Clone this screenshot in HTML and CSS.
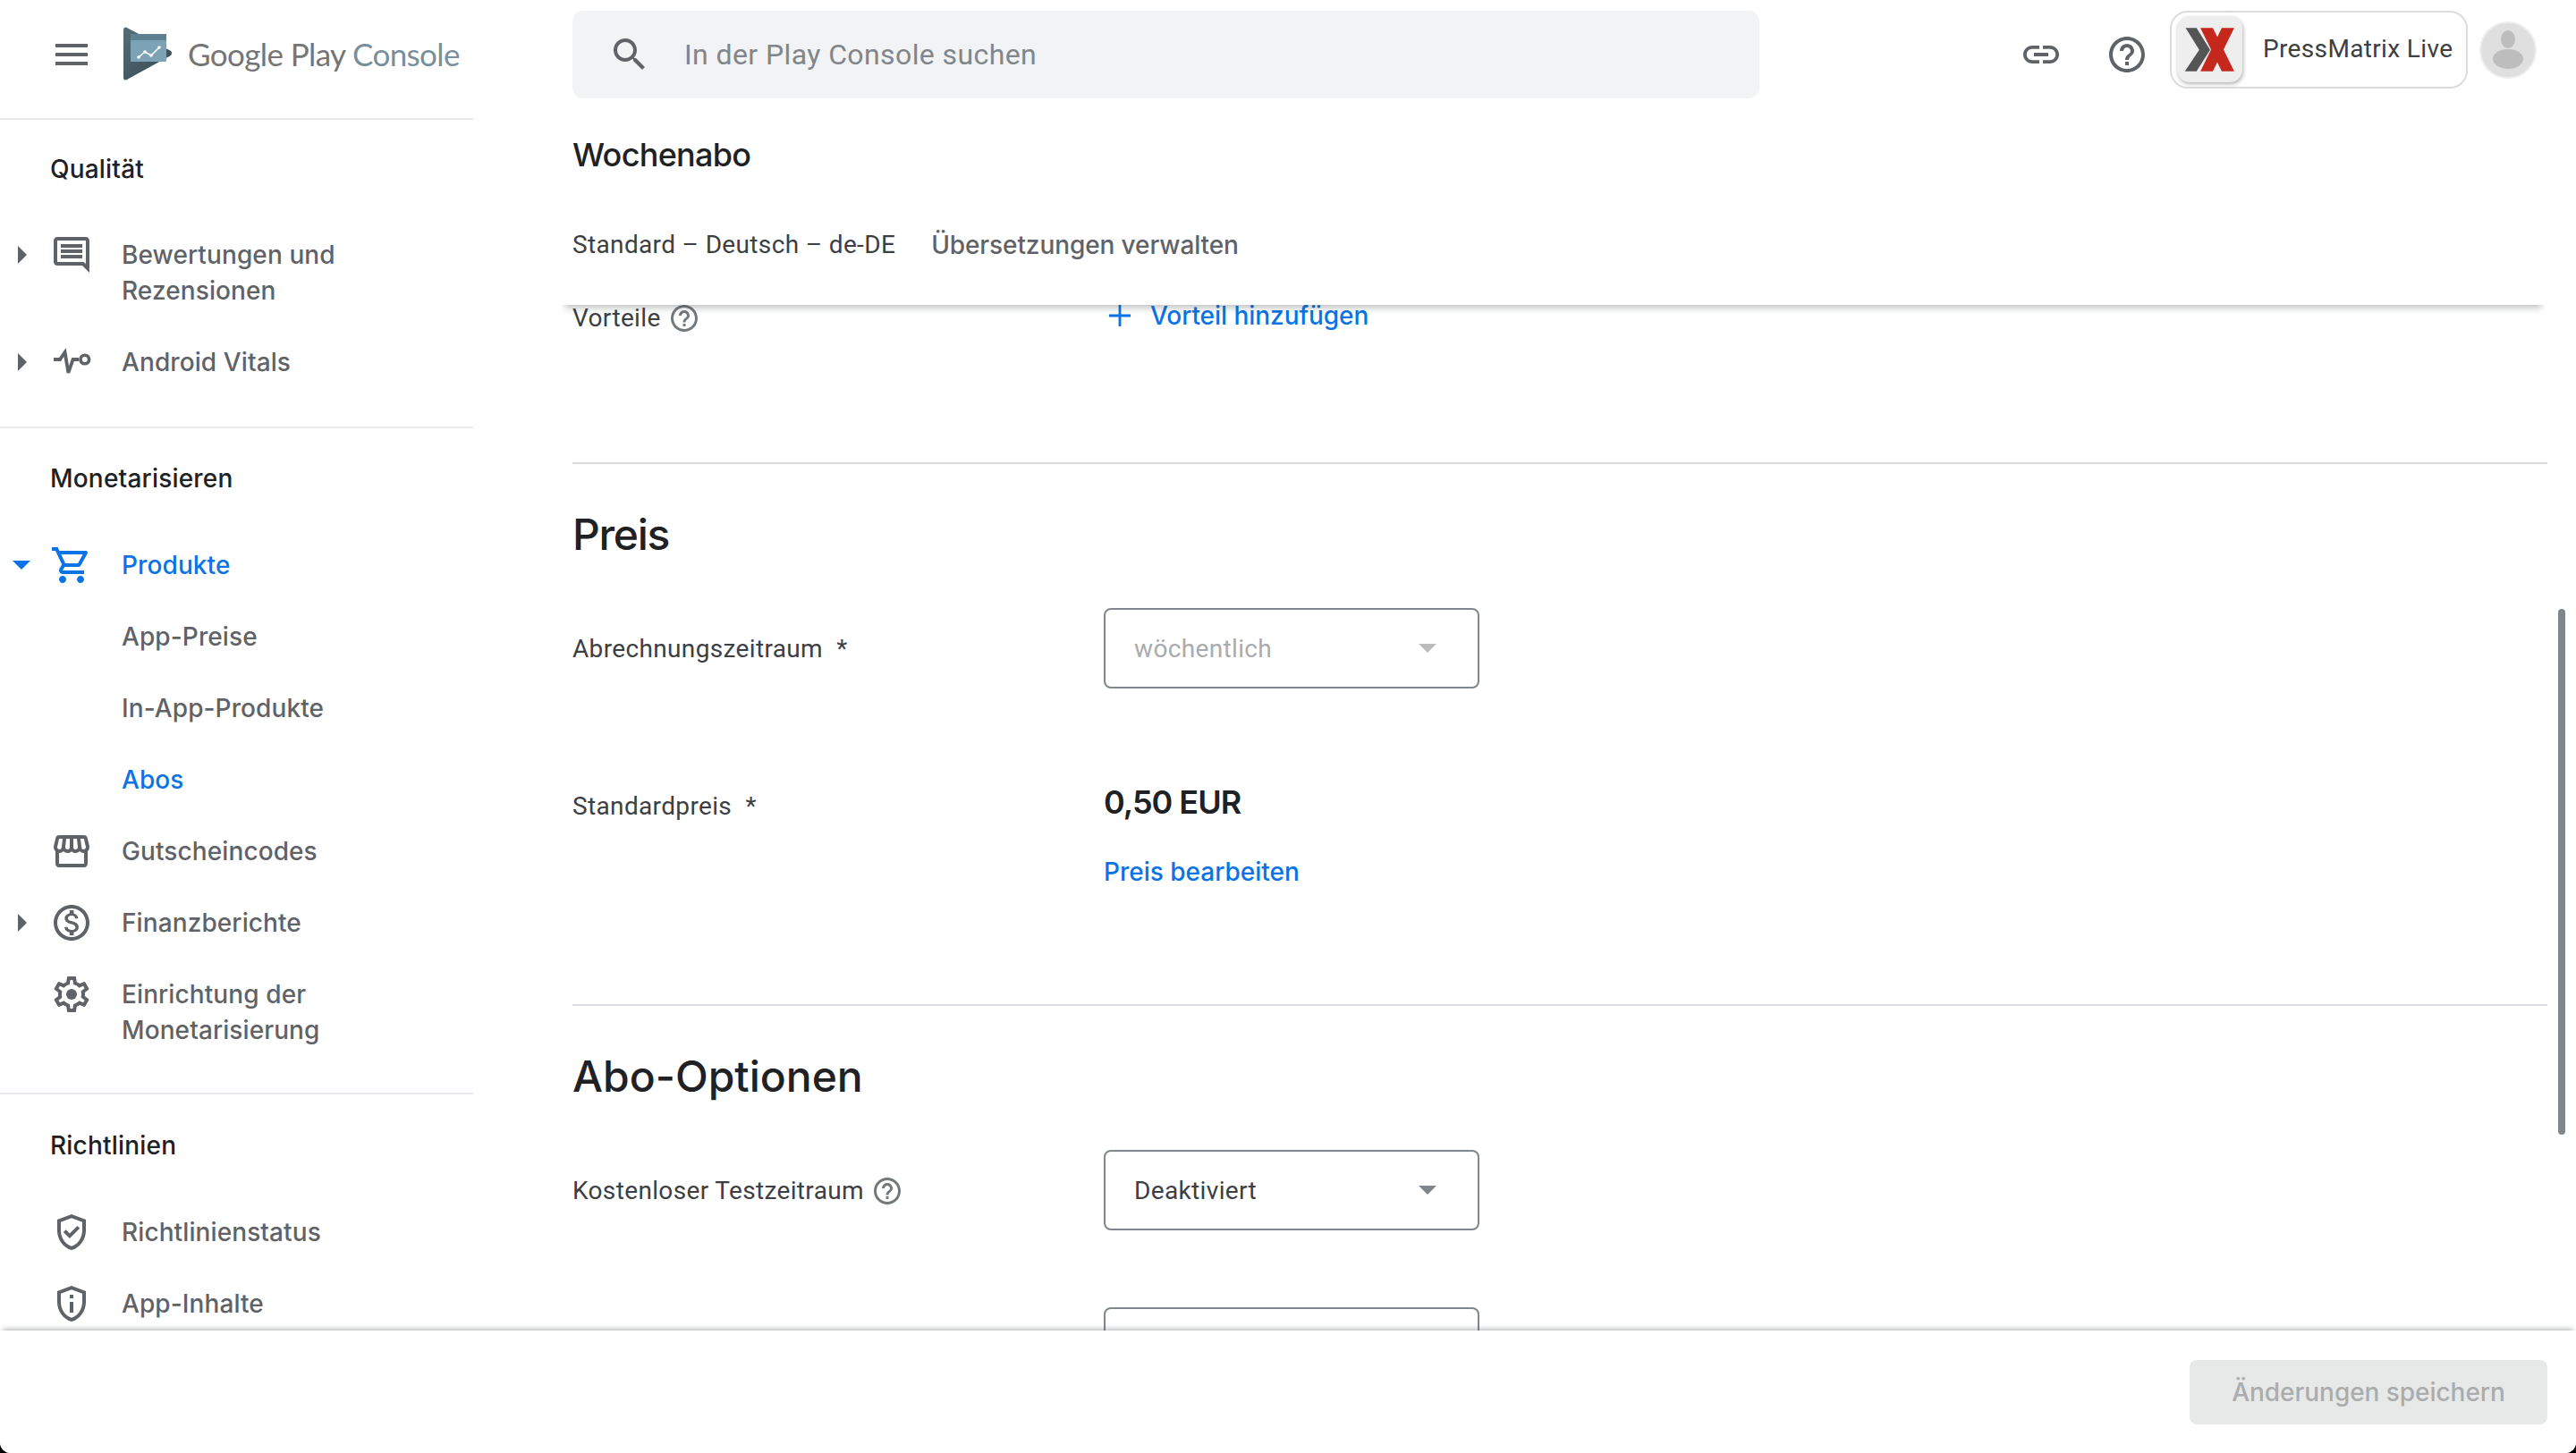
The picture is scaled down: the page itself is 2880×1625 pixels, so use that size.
FILE: index.html
```html
<!DOCTYPE html>
<html lang="de">
<head>
<meta charset="utf-8">
<title>Google Play Console</title>
<link rel="stylesheet" href="styles.css">
</head>
<body>
<div class="app">
  <aside class="sidebar">
    <div class="brand">
      <svg class="icon menu" viewBox="0 0 24 24"><path d="M3 18h18v-2H3v2zm0-5h18v-2H3v2zm0-7v2h18V6H3z"/></svg>
      <svg class="logo" viewBox="0 0 55 60">
        <defs><linearGradient id="lg" x1="0" y1="0" x2="1" y2="1"><stop offset="0" stop-color="#546e7a"/><stop offset="1" stop-color="#37474f"/></linearGradient></defs>
        <path d="M0 3Q0 0 3 .5L53 27q2 2 0 5L3 59.5Q0 60 0 57z" fill="url(#lg)"/>
        <rect x="8" y="8" width="40" height="31" rx="1" fill="#7ba3b5"/>
        <rect x="8" y="8" width="40" height="7" fill="#5d8191"/>
        <path d="M17 34l7-6 7 4 9-9" fill="none" stroke="#fff" stroke-width="1.6"/>
        <circle cx="17" cy="34" r="1.8" fill="#fff"/><circle cx="24" cy="28" r="1.8" fill="#fff"/><circle cx="31" cy="32" r="1.8" fill="#fff"/><circle cx="40" cy="23" r="1.8" fill="#fff"/>
      </svg>
      <div class="wordmark">Google Play <span class="wordmark-accent">Console</span></div>
    </div>
    <nav class="nav-section nav-quality">
      <h3 class="nav-title">Qualität</h3>
      <a class="nav-item"><span class="caret"></span><svg class="icon" viewBox="0 0 24 24"><path d="M21.99 4c0-1.1-.89-2-1.99-2H4c-1.1 0-2 .9-2 2v12c0 1.1.9 2 2 2h14l4 4-.01-18zM20 4v13.17L18.83 16H4V4h16zM6 12h12v2H6zm0-3h12v2H6zm0-3h12v2H6z"/></svg><span class="nav-label">Bewertungen und<br>Rezensionen</span></a>
      <a class="nav-item"><span class="caret"></span><svg class="icon" viewBox="0 0 24 24"><path d="M2 10.5h3.5l2.8-4 1.9 11.5 2.6-7.5H16" fill="none" stroke="currentColor" stroke-width="1.9"/><circle cx="19.4" cy="10.5" r="2.4" fill="none" stroke="currentColor" stroke-width="1.8"/></svg><span class="nav-label">Android Vitals</span></a>
    </nav>
    <nav class="nav-section nav-money">
      <h3 class="nav-title">Monetarisieren</h3>
      <a class="nav-item is-active"><span class="caret caret-open"></span><svg class="icon" viewBox="0 0 24 24"><path d="M15.55 13c.75 0 1.41-.41 1.75-1.03l3.58-6.49c.37-.66-.11-1.48-.87-1.48H5.21l-.94-2H1v2h2l3.6 7.59-1.35 2.44C4.52 15.37 5.48 17 7 17h12v-2H7l1.1-2h7.45zM6.16 6h12.15l-2.76 5H8.53L6.16 6zM7 18c-1.1 0-1.99.9-1.99 2S5.9 22 7 22s2-.9 2-2-.9-2-2-2zm10 0c-1.1 0-1.99.9-1.99 2s.89 2 1.99 2 2-.9 2-2-.9-2-2-2z"/></svg><span class="nav-label">Produkte</span></a>
      <a class="nav-item nav-sub"><span class="nav-label">App-Preise</span></a>
      <a class="nav-item nav-sub"><span class="nav-label">In-App-Produkte</span></a>
      <a class="nav-item nav-sub is-active"><span class="nav-label">Abos</span></a>
      <a class="nav-item"><svg class="icon" viewBox="0 0 24 24"><path d="M21.9 8.89l-1.05-4.37c-.22-.9-1-1.52-1.91-1.52H5.05c-.9 0-1.69.63-1.9 1.52L2.1 8.89c-.24 1.02-.02 2.06.62 2.88.08.11.19.19.28.29V19c0 1.1.9 2 2 2h14c1.1 0 2-.9 2-2v-6.94c.09-.09.2-.18.28-.28.64-.82.87-1.87.62-2.89zm-2.99-3.9l1.05 4.37c.1.42.01.84-.25 1.17-.14.18-.44.47-.94.47-.61 0-1.14-.49-1.21-1.14L16.98 5l1.93-.01zM13 5h1.96l.54 4.52c.05.39-.07.78-.33 1.07-.22.26-.54.41-.95.41-.67 0-1.22-.59-1.22-1.31V5zM8.49 9.52L9.04 5H11v4.69c0 .72-.55 1.31-1.29 1.31-.34 0-.65-.15-.89-.41-.25-.29-.37-.68-.33-1.07zm-4.45-.16L5.05 5h1.97l-.58 4.86c-.08.65-.6 1.14-1.21 1.14-.49 0-.8-.29-.93-.47-.27-.32-.36-.75-.26-1.17zM5 19v-6.03c.08.01.15.03.23.03.87 0 1.66-.36 2.24-.95.6.6 1.4.95 2.31.95.87 0 1.65-.36 2.23-.93.59.57 1.39.93 2.29.93.84 0 1.64-.35 2.24-.95.58.59 1.37.95 2.24.95.08 0 .15-.02.23-.03V19H5z"/></svg><span class="nav-label">Gutscheincodes</span></a>
      <a class="nav-item"><span class="caret"></span><svg class="icon" viewBox="0 0 24 24"><path d="M12 2C6.48 2 2 6.48 2 12s4.48 10 10 10 10-4.48 10-10S17.52 2 12 2zm0 18c-4.41 0-8-3.59-8-8s3.59-8 8-8 8 3.59 8 8-3.59 8-8 8zm.31-8.86c-1.77-.45-2.34-.94-2.34-1.67 0-.84.79-1.43 2.1-1.43 1.38 0 1.9.66 1.94 1.64h1.71c-.05-1.34-.87-2.57-2.49-2.97V5H10.9v1.69c-1.51.32-2.72 1.3-2.72 2.81 0 1.79 1.49 2.69 3.66 3.21 1.95.46 2.34 1.15 2.34 1.87 0 .53-.39 1.39-2.1 1.39-1.6 0-2.23-.72-2.32-1.64H8.04c.1 1.7 1.36 2.66 2.86 2.97V19h2.34v-1.67c1.52-.29 2.72-1.16 2.73-2.77-.01-2.2-1.9-2.96-3.66-3.42z"/></svg><span class="nav-label">Finanzberichte</span></a>
      <a class="nav-item"><svg class="icon" viewBox="0 0 24 24"><path d="M19.43 12.98c.04-.32.07-.64.07-.98 0-.34-.03-.66-.07-.98l2.11-1.65c.19-.15.24-.42.12-.64l-2-3.46c-.09-.16-.26-.25-.44-.25-.06 0-.12.01-.17.03l-2.49 1c-.52-.4-1.08-.73-1.69-.98l-.38-2.65C14.46 2.18 14.25 2 14 2h-4c-.25 0-.46.18-.49.42l-.38 2.65c-.61.25-1.17.59-1.69.98l-2.49-1c-.06-.02-.12-.03-.18-.03-.17 0-.34.09-.43.25l-2 3.46c-.13.22-.07.49.12.64l2.11 1.65c-.04.32-.07.65-.07.98 0 .33.03.66.07.98l-2.11 1.65c-.19.15-.24.42-.12.64l2 3.46c.09.16.26.25.44.25.06 0 .12-.01.17-.03l2.49-1c.52.4 1.08.73 1.69.98l.38 2.65c.03.24.24.42.49.42h4c.25 0 .46-.18.49-.42l.38-2.65c.61-.25 1.17-.59 1.69-.98l2.49 1c.06.02.12.03.18.03.17 0 .34-.09.43-.25l2-3.46c.12-.22.07-.49-.12-.64l-2.11-1.65zm-1.98-1.71c.04.31.05.52.05.73 0 .21-.02.43-.05.73l-.14 1.13.89.7 1.08.84-.7 1.21-1.27-.51-1.04-.42-.9.68c-.43.32-.84.56-1.25.73l-1.06.43-.16 1.13-.2 1.35h-1.4l-.19-1.35-.16-1.13-1.06-.43c-.43-.18-.83-.41-1.23-.71l-.91-.7-1.06.43-1.27.51-.7-1.21 1.08-.84.89-.7-.14-1.13c-.03-.31-.05-.54-.05-.74s.02-.43.05-.73l.14-1.13-.89-.7-1.08-.84.7-1.21 1.27.51 1.04.42.9-.68c.43-.32.84-.56 1.25-.73l1.06-.43.16-1.13.2-1.35h1.39l.19 1.35.16 1.13 1.06.43c.43.18.83.41 1.23.71l.91.7 1.06-.43 1.27-.51.7 1.21-1.07.85-.89.7.14 1.13z"/><circle cx="12" cy="12" r="3"/></svg><span class="nav-label">Einrichtung der<br>Monetarisierung</span></a>
    </nav>
    <nav class="nav-section nav-policy">
      <h3 class="nav-title">Richtlinien</h3>
      <a class="nav-item"><svg class="icon" viewBox="0 0 24 24"><path d="M12 2 4 5v6.09c0 5.05 3.41 9.76 8 10.91 4.59-1.15 8-5.86 8-10.91V5l-8-3zm6 9.09c0 4-2.55 7.7-6 8.83-3.45-1.13-6-4.82-6-8.83v-4.7l6-2.25 6 2.25v4.7z"/><path d="M8.82 10.59 7.41 12l3.54 3.54 5.66-5.66-1.41-1.41-4.25 4.24z"/></svg><span class="nav-label">Richtlinienstatus</span></a>
      <a class="nav-item"><svg class="icon" viewBox="0 0 24 24"><path d="M12 2 4 5v6.09c0 5.05 3.41 9.76 8 10.91 4.59-1.15 8-5.86 8-10.91V5l-8-3zm6 9.09c0 4-2.55 7.7-6 8.83-3.45-1.13-6-4.82-6-8.83v-4.7l6-2.25 6 2.25v4.7z"/><path d="M11 7h2v2h-2zm0 4h2v6h-2z"/></svg><span class="nav-label">App-Inhalte</span></a>
    </nav>
  </aside>

  <main class="main">
    <header class="page-header">
      <div class="topbar">
        <div class="search">
          <svg class="icon" viewBox="0 0 24 24"><path d="M15.5 14h-.79l-.28-.27C15.41 12.59 16 11.11 16 9.5 16 5.91 13.09 3 9.5 3S3 5.91 3 9.5 5.91 16 9.5 16c1.61 0 3.09-.59 4.23-1.57l.27.28v.79l5 4.99L20.49 19l-4.99-5zm-6 0C7.01 14 5 11.99 5 9.5S7.01 5 9.5 5 14 7.01 14 9.5 11.99 14 9.5 14z"/></svg>
          <span class="search-text">In der Play Console suchen</span>
        </div>
        <div class="actions">
          <svg class="icon" viewBox="0 0 24 24"><path d="M3.9 12c0-1.71 1.39-3.1 3.1-3.1h4V7H7c-2.76 0-5 2.24-5 5s2.24 5 5 5h4v-1.9H7c-1.71 0-3.1-1.39-3.1-3.1zM8 13h8v-2H8v2zm9-6h-4v1.9h4c1.71 0 3.1 1.39 3.1 3.1s-1.39 3.1-3.1 3.1h-4V17h4c2.76 0 5-2.24 5-5s-2.24-5-5-5z"/></svg>
          <svg class="icon icon-help" viewBox="0 0 24 24"><path d="M11 18h2v-2h-2v2zm1-16C6.48 2 2 6.48 2 12s4.48 10 10 10 10-4.48 10-10S17.52 2 12 2zm0 18c-4.41 0-8-3.59-8-8s3.59-8 8-8 8 3.59 8 8-3.59 8-8 8zm0-14c-2.21 0-4 1.79-4 4h2c0-1.1.9-2 2-2s2 .9 2 2c0 2-3 1.75-3 5h2c0-2.25 3-2.5 3-5 0-2.21-1.79-4-4-4z"/></svg>
          <div class="account">
            <svg class="app-icon" viewBox="540 55 168 222" preserveAspectRatio="none">
              <path d="M562 95h28l35 73-35 72h-30l37-72z" fill="#555"/>
              <path d="M600 95h32l55 145h-32z" fill="#c5281c"/>
              <path d="M655 95h32l-55 145h-32z" fill="#c5281c"/>
            </svg>
            <span class="account-name">PressMatrix Live</span>
          </div>
          <svg class="avatar" viewBox="0 0 64 64">
            <circle cx="32" cy="32" r="31" fill="#dfdfdf" stroke="#eee" stroke-width="2"/>
            <ellipse cx="32" cy="20" rx="8" ry="10" fill="#bdbdbd"/>
            <ellipse cx="32" cy="42" rx="17" ry="11" fill="#bdbdbd"/>
          </svg>
        </div>
      </div>
      <h1 class="page-title">Wochenabo</h1>
      <div class="lang-row"><span class="lang">Standard – Deutsch – de-DE</span><span class="lang-manage">Übersetzungen verwalten</span></div>
    </header>

    <div class="content">
      <section class="section section-benefits">
        <div class="form-row">
          <div class="field-label">Vorteile <svg class="icon-small" viewBox="0 0 24 24"><path d="M11 18h2v-2h-2v2zm1-16C6.48 2 2 6.48 2 12s4.48 10 10 10 10-4.48 10-10S17.52 2 12 2zm0 18c-4.41 0-8-3.59-8-8s3.59-8 8-8 8 3.59 8 8-3.59 8-8 8zm0-14c-2.21 0-4 1.79-4 4h2c0-1.1.9-2 2-2s2 .9 2 2c0 2-3 1.75-3 5h2c0-2.25 3-2.5 3-5 0-2.21-1.79-4-4-4z"/></svg></div>
          <a class="add-link"><svg class="icon-plus" viewBox="0 0 48 48"><path d="M24 12v24M12 24h24" fill="none" stroke="currentColor" stroke-width="2.8"/></svg>Vorteil hinzufügen</a>
        </div>
      </section>

      <section class="section section-price">
        <h2 class="section-title section-title-short">Preis</h2>
        <div class="form-row form-row-select">
          <div class="field-label">Abrechnungszeitraum <span class="req">*</span></div>
          <div class="select select-disabled"><span>wöchentlich</span><i class="select-arrow"></i></div>
        </div>
        <div class="form-row form-row-price">
          <div class="field-label">Standardpreis <span class="req">*</span></div>
          <div class="price-box">
            <div class="price">0,50 EUR</div>
            <a class="price-edit">Preis bearbeiten</a>
          </div>
        </div>
      </section>

      <section class="section-options">
        <h2 class="section-title">Abo-Optionen</h2>
        <div class="form-row form-row-select">
          <div class="field-label">Kostenloser Testzeitraum <svg class="icon-small" viewBox="0 0 24 24"><path d="M11 18h2v-2h-2v2zm1-16C6.48 2 2 6.48 2 12s4.48 10 10 10 10-4.48 10-10S17.52 2 12 2zm0 18c-4.41 0-8-3.59-8-8s3.59-8 8-8 8 3.59 8 8-3.59 8-8 8zm0-14c-2.21 0-4 1.79-4 4h2c0-1.1.9-2 2-2s2 .9 2 2c0 2-3 1.75-3 5h2c0-2.25 3-2.5 3-5 0-2.21-1.79-4-4-4z"/></svg></div>
          <div class="select"><span>Deaktiviert</span><i class="select-arrow"></i></div>
        </div>
        <div class="form-row form-row-select form-row-next">
          <div class="field-label"></div>
          <div class="select"></div>
        </div>
      </section>
    </div>
    <div class="scrollbar"></div>
  </main>

  <footer class="footer">
    <button class="save-btn" type="button">Änderungen speichern</button>
  </footer>
</div>
</body>
</html>
```
FILE: styles.css
```css
* { box-sizing: border-box; }
html, body { margin: 0; padding: 0; background: #000; }
body { font-family: "Inter", "Noto Sans", sans-serif; font-size: 28px; color: #202124; }
.app {
  width: 2880px; height: 1625px; background: #fff; overflow: hidden;
  border-radius: 0 0 12px 12px;
  display: grid; grid-template-columns: 529px 1fr; grid-template-rows: 1488px 137px;
}
.icon { width: 48px; height: 48px; flex: none; fill: #5f6368; color: #5f6368; }
.sidebar { overflow: hidden; background: #fff; }
.brand { height: 132px; display: flex; align-items: flex-start; padding: 37px 0 0 56px; }
.logo { width: 55px; height: 60px; margin: -7px 0 0 34px; flex: none; }
.wordmark { margin: -1px 0 0 17px; font-family: "Lato", sans-serif; font-size: 35px; line-height: 48px; color: #757575; letter-spacing: -.6px; white-space: nowrap; }
.wordmark-accent { color: #78909c; }
.nav-section { border-top: 2px solid #e8eaed; }
.nav-quality { padding: 35px 0 32px; }
.nav-money { padding: 36px 0 30px; }
.nav-policy { padding: 37px 0 0; }
.nav-title { margin: 0 0 37px 56px; font-size: 28px; line-height: 40px; font-weight: 500; color: #202124; letter-spacing: .2px; }
.nav-quality .nav-title { margin-bottom: 36px; }
.nav-item { position: relative; display: flex; align-items: flex-start; padding: 20px 0 20px 56px; color: #5f6368; line-height: 40px; }
.nav-label { margin-left: 32px; font-weight: 500; letter-spacing: .1px; }
.nav-sub { padding-left: 136px; }
.nav-sub .nav-label { margin-left: 0; }
.nav-item .icon { margin: -4px 0; }
.caret { position: absolute; left: 20px; top: 30px; border-style: solid; border-width: 10px 0 10px 10px; border-color: transparent transparent transparent #5f6368; }
.caret-open { left: 14px; top: 35px; border-width: 10px 10px 0; border-color: #0a73e5 transparent transparent; }
.is-active, .is-active .icon { color: #0a73e5; fill: #0a73e5; }
.main { position: relative; overflow: hidden; padding-left: 111px; }
.page-header {
  position: relative; z-index: 1; height: 341px; background: #fff;
  margin-left: -12px; padding-left: 12px; margin-right: 35px; padding-right: 9px;
  box-shadow: 0 7px 8px -4px rgba(60, 64, 67, .35);
  clip-path: inset(0 0 -20px 0);
}
.topbar { height: 122px; padding-top: 12px; display: flex; align-items: flex-start; justify-content: space-between; }
.search { width: 1327px; height: 98px; background: #f1f3f4; border-radius: 12px; display: flex; align-items: center; padding-left: 40px; }
.search-text { margin-left: 37px; font-family: "Roboto", sans-serif; font-size: 32px; letter-spacing: .4px; color: #80868b; }
.actions { display: flex; align-items: flex-start; }
.actions > .icon { margin-top: 25px; }
.icon-help { margin-left: 48px; }
.account { margin-left: 24px; width: 333px; height: 87px; border: 2px solid #dadce0; border-radius: 20px; display: flex; align-items: flex-start; padding: 4px 0 0 6px; }
.app-icon { width: 73px; height: 74px; flex: none; background: #eee; border-radius: 14px; box-shadow: 1px 2px 4px rgba(0, 0, 0, .3); }
.account-name { margin-left: 23px; margin-top: 19px; font-family: "Roboto", sans-serif; font-size: 28px; line-height: 36px; letter-spacing: .35px; color: #3c4043; white-space: nowrap; }
.avatar { width: 64px; height: 64px; flex: none; margin: 12px 0 0 13px; }
.page-title { margin: 0; font-size: 36px; line-height: 48px; font-weight: 500; letter-spacing: -.7px; color: #202124; padding-top: 27px; }
.lang-row { margin-top: 57px; line-height: 40px; display: flex; }
.lang { color: #3c4043; font-family: "Roboto", sans-serif; letter-spacing: .35px; }
.lang-manage { margin-left: 40px; color: #5f6368; font-weight: 500; letter-spacing: -.1px; }
.content { margin-top: -6px; padding-right: 32px; }
.section { border-bottom: 2px solid #dadce0; }
.section-benefits { height: 184px; }
.section-price { padding-bottom: 128px; padding-top: 47px; }
.section-options { padding-top: 47px; }
.section-title { margin: 0; font-size: 48px; line-height: 64px; font-weight: 500; color: #202124; }
.section-title-short { letter-spacing: -1.3px; }
.form-row { display: grid; grid-template-columns: 594px 1fr; }
.form-row-select { margin-top: 50px; height: 90px; align-items: center; }
.form-row-price { margin-top: 103px; }
.form-row-next { margin-top: 86px; }
.field-label { display: flex; align-items: center; line-height: 40px; padding-top: 1px; color: #3c4043; font-family: "Roboto", sans-serif; letter-spacing: .35px; white-space: pre; }
.form-row-price .field-label { align-self: start; padding-top: 9px; height: 48px; }
.req { margin-left: 8px; }
.icon-small { width: 36px; height: 36px; fill: #73787c; margin-left: 1px; }
.add-link { display: flex; align-items: center; height: 40px; margin-top: -2px; margin-left: -6px; color: #0a73e5; font-weight: 500; letter-spacing: -.05px; }
.icon-plus { width: 48px; height: 48px; margin-right: 10px; flex: none; }
.select { width: 420px; height: 90px; border: 2px solid #80868b; border-radius: 8px; display: flex; align-items: center; justify-content: space-between; padding: 0 46px 0 32px; color: #3c4043; font-family: "Roboto", sans-serif; letter-spacing: .35px; }
.select-arrow { display: block; border-style: solid; border-width: 10px 10px 0; border-color: #80868b transparent transparent; margin-left: auto; }
.select-disabled { color: #a9abad; }
.select-disabled .select-arrow { border-top-color: #bdbdbd; }
.price { font-size: 36px; line-height: 48px; font-weight: 600; letter-spacing: -1px; color: #202124; }
.price-edit { display: block; margin-top: 34px; line-height: 40px; color: #0a73e5; font-weight: 500; }
.scrollbar { position: absolute; left: 2331px; top: 681px; width: 8px; height: 588px; background: #80868b; border-radius: 4px; }
.footer {
  grid-column: 1 / -1; position: relative; z-index: 2; background: #fff;
  box-shadow: 0 -4px 6px -3px rgba(60, 64, 67, .45);
  display: flex; justify-content: flex-end; align-items: flex-start; padding: 33px 32px 0 0;
}
.save-btn { width: 400px; height: 72px; background: #e7e8e8; color: #aaacae; border: 0; border-radius: 8px; font: 500 28px "Inter", sans-serif; letter-spacing: -.05px; }
```
